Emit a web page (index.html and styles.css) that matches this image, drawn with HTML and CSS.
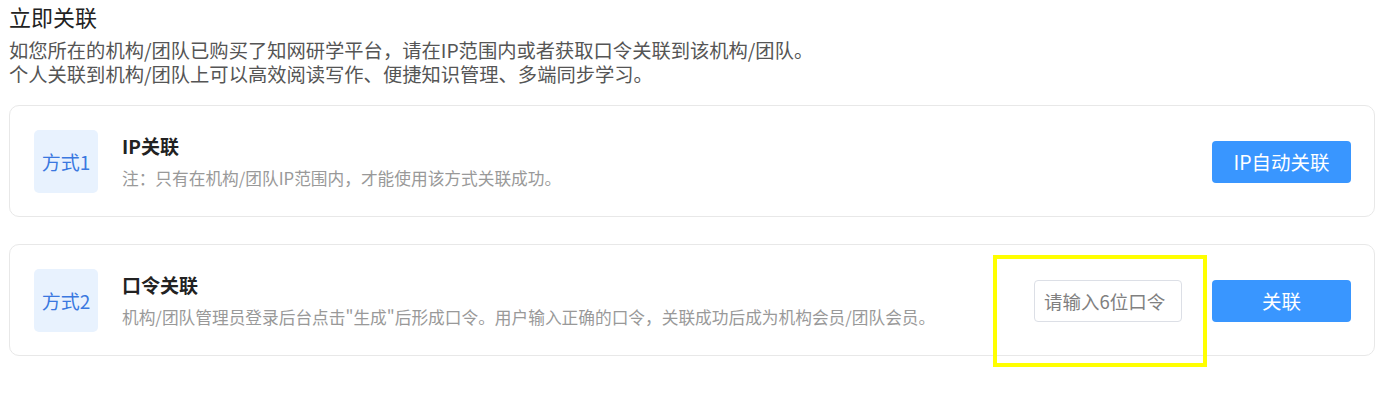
FILE: index.html
```html
<!DOCTYPE html>
<html lang="zh-CN">
<head>
    <meta charset="UTF-8">
    <meta name="viewport" content="width=device-width, initial-scale=1.0">
    <title>立即关联</title>
    <link rel="stylesheet" href="styles.css">
</head>
<body>
    <div class="page">
        <div class="page-title">立即关联</div>
        <div class="desc">
            <p>如您所在的机构/团队已购买了知网研学平台，请在IP范围内或者获取口令关联到该机构/团队。</p>
            <p>个人关联到机构/团队上可以高效阅读写作、便捷知识管理、多端同步学习。</p>
        </div>

        <div class="way-card">
            <div class="way-tag">方式1</div>
            <div class="way-info">
                <div class="way-name">IP关联</div>
                <div class="way-note">注：只有在机构/团队IP范围内，才能使用该方式关联成功。</div>
            </div>
            <div class="way-actions">
                <button class="btn-primary">IP自动关联</button>
            </div>
        </div>

        <div class="way-card">
            <div class="way-tag">方式2</div>
            <div class="way-info">
                <div class="way-name">口令关联</div>
                <div class="way-note">机构/团队管理员登录后台点击"生成"后形成口令。用户输入正确的口令，关联成功后成为机构会员/团队会员。</div>
            </div>
            <div class="way-actions">
                <input class="code-input" type="text" placeholder="请输入6位口令">
                <button class="btn-primary">关联</button>
            </div>
            <div class="highlight-box"></div>
        </div>
    </div>
</body>
</html>
```

FILE: styles.css
```css
* {
    margin: 0;
    padding: 0;
    box-sizing: border-box;
}

html, body {
    min-height: 100%;
}

body {
    font-family: "Noto Sans CJK SC", "Liberation Sans", sans-serif;
    background-color: #fff;
    color: #222;
}

.page {
    padding: 0 9px 60px;
}

.page-title {
    font-size: 22px;
    line-height: 32px;
    color: #222;
}

.desc {
    margin-top: 6px;
    font-size: 19.3px;
    line-height: 24px;
    color: #555;
}

.way-card {
    position: relative;
    display: flex;
    align-items: center;
    margin-top: 19px;
    padding: 24px 23px 23px 24px;
    border: 1px solid #e8e8e8;
    border-radius: 10px;
}

.way-card + .way-card {
    margin-top: 27px;
}

.way-tag {
    width: 64px;
    height: 63px;
    flex-shrink: 0;
    display: flex;
    align-items: center;
    justify-content: center;
    background-color: #e8f2fe;
    border-radius: 5px;
    color: #3a78e0;
    font-size: 19px;
}

.way-info {
    flex: 1;
    margin-left: 24px;
}

.way-name {
    font-size: 19px;
    line-height: 26px;
    font-weight: bold;
    color: #222;
}

.way-note {
    margin-top: 6px;
    font-size: 16.7px;
    line-height: 26px;
    color: #999;
}

.way-actions {
    display: flex;
    align-items: center;
    gap: 30px;
}

.btn-primary {
    width: 139px;
    height: 42px;
    border: none;
    border-radius: 4px;
    background-color: #3996ff;
    color: #fff;
    font-family: inherit;
    font-size: 19.5px;
    cursor: pointer;
}

.code-input {
    width: 148px;
    height: 42px;
    padding: 0 9px;
    border: 1px solid #dcdfe6;
    border-radius: 4px;
    font-family: inherit;
    font-size: 18.5px;
    color: #333;
    outline: none;
}

.code-input::placeholder {
    color: #808080;
}

.highlight-box {
    position: absolute;
    top: 10px;
    right: 167px;
    width: 214px;
    height: 112px;
    border: 4px solid #ffff00;
    pointer-events: none;
}
```
